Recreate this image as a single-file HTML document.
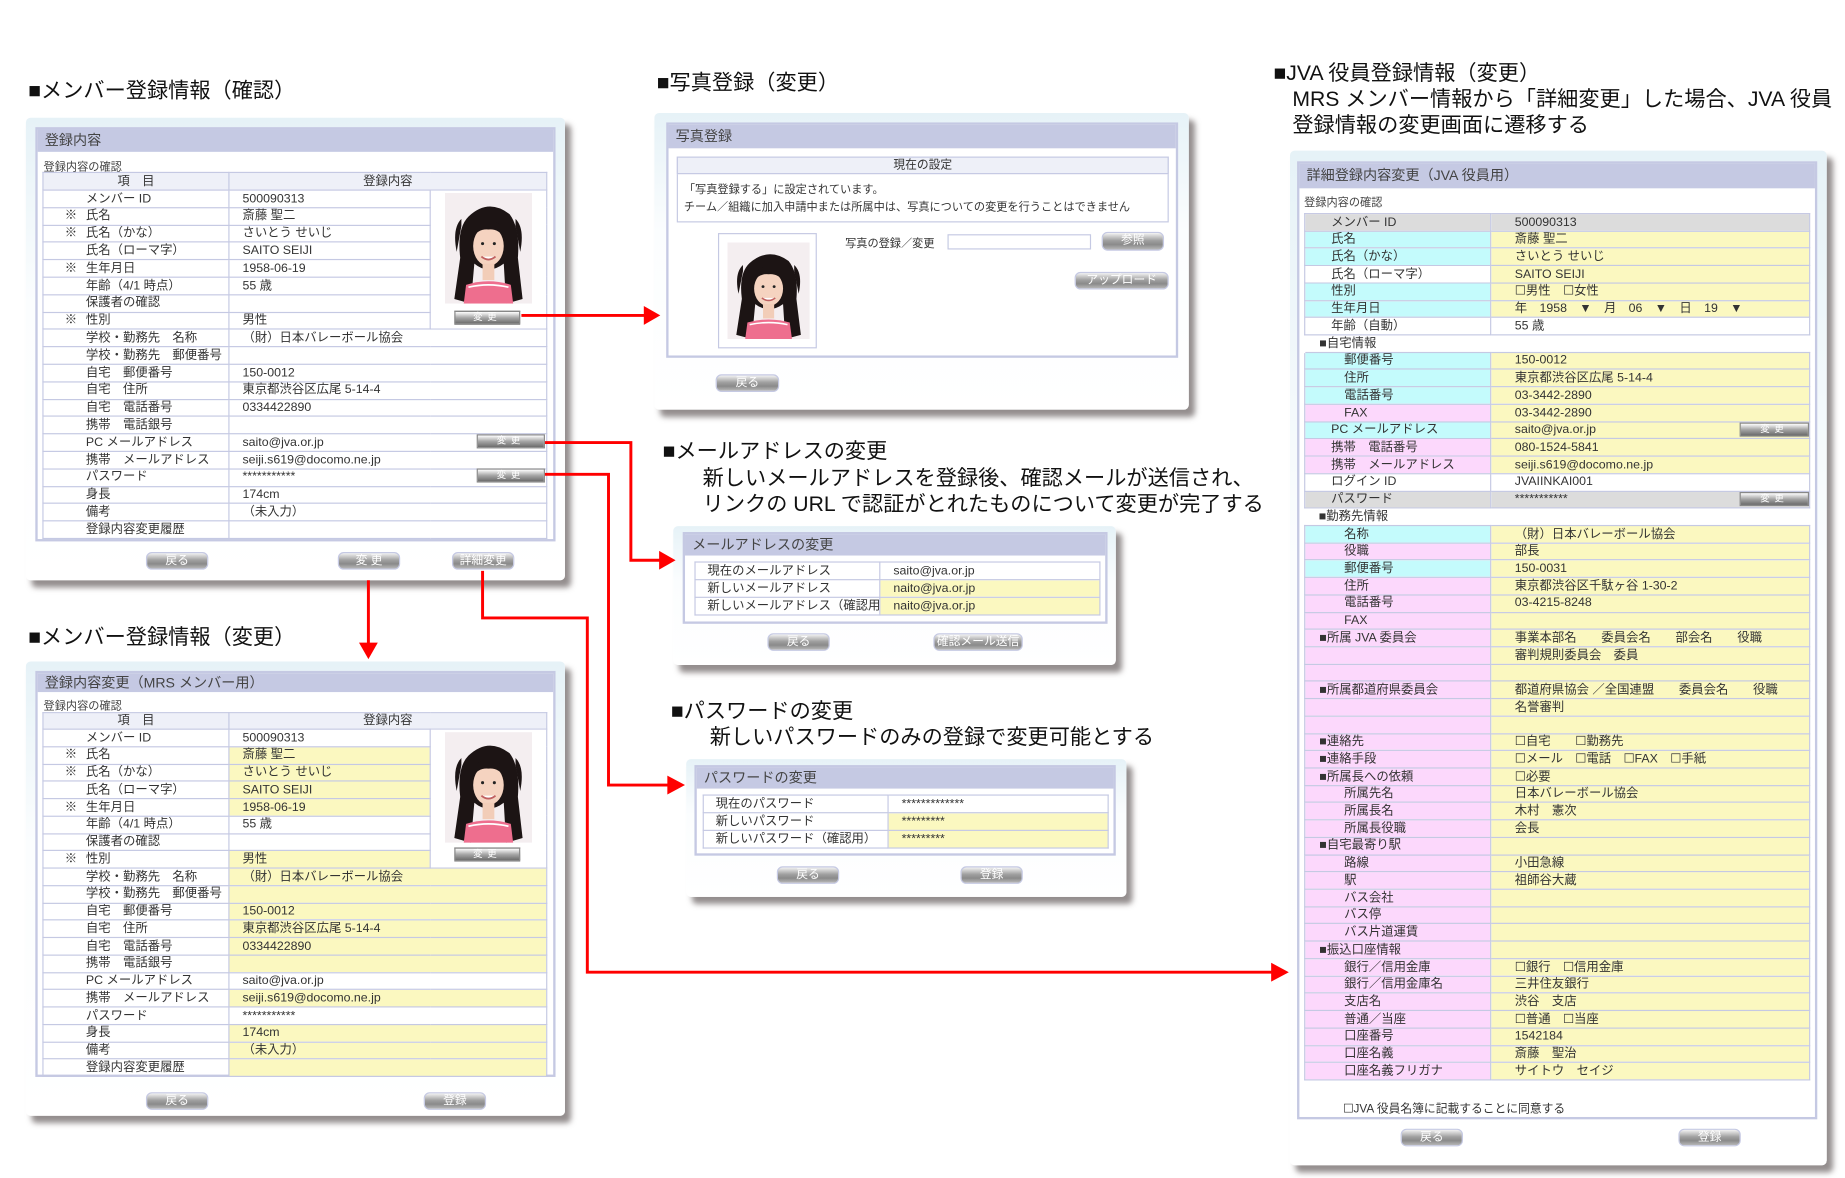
<!DOCTYPE html>
<html><head><meta charset="utf-8">
<style>
*{margin:0;padding:0;box-sizing:border-box}
html,body{width:1845px;height:1178px;overflow:hidden;background:#fff}
body{font-family:"Liberation Sans","Noto Sans CJK JP",sans-serif;color:#222}
.s{position:absolute;left:0;top:0;width:1563px;height:998px;transform:scale(1.177);transform-origin:0 0}
.a{position:absolute}
.t{position:absolute;font-size:18px;white-space:nowrap;color:#111;line-height:20px}
.o{position:absolute;background:linear-gradient(#e6f2f7,#fbfdfe 40%,#fff);border-radius:4px;box-shadow:5px 6px 5px rgba(60,50,50,.55)}
.i{position:absolute;border:2px solid #c5c9e3;background:#fff}
.h{position:absolute;left:0;top:0;right:0;background:#c5c9e3;font-size:12px;color:#444;padding-left:6px}
.sm{position:absolute;font-size:9.5px;color:#444;white-space:nowrap}
table{position:absolute;border-collapse:collapse;table-layout:fixed;font-size:10.5px;color:#333}
td{border:1px solid #c5c9e3;white-space:nowrap;overflow:hidden;line-height:1;padding:0;vertical-align:middle}
td.l{position:relative;padding-left:36px}
td.v{padding-left:11px}
td.c{text-align:center;background:#eef0f8}
.m{position:absolute;left:18px}
.y{background:#fbf8c0}.cy{background:#c4fbfc}.p{background:#fcd8fc}.g{background:#dcdcdc}
.b{position:absolute;height:15px;border-radius:5px;border:1px solid #c5c9e3;background:linear-gradient(#f2f2f2,#a0a0a0 45%,#8a8a8a 70%,#b8b8b8);color:#fff;font-size:10px;text-align:center;line-height:13px;white-space:nowrap}
.k{position:absolute;height:12px;border:1px solid #888;background:linear-gradient(#fff,#a5a5a5 50%,#6a6a6a);color:#fff;font-size:8px;text-align:center;line-height:10px;letter-spacing:4px}
td.ph{vertical-align:top;background:#fff}
.j td{height:14.72px}
.j td.l{padding-left:22px}
.j td.l2{padding-left:33px}
.j td.sec{padding-left:12px}
.j td.v{padding-left:20px}
</style></head><body>
<svg width="0" height="0" style="position:absolute">
<defs>
<symbol id="girl" viewBox="0 0 74 94">
<rect width="74" height="94" fill="#f4eef0"/>
<path d="M20 20 Q37 4 55 18 Q64 30 62 55 L66 90 L52 94 L50 60 Q37 70 25 60 L22 94 L8 90 L13 55 Q10 30 20 20Z" fill="#1c1414"/>
<path d="M14 22 Q6 30 10 50 L14 28Z M60 22 Q68 30 64 50 L60 28Z" fill="#1c1414"/>
<ellipse cx="37" cy="45" rx="13" ry="17" fill="#f5d3c0"/>
<path d="M23 38 Q26 22 37 24 Q48 22 51 38 Q45 30 37 31 Q29 30 23 38Z" fill="#1c1414"/>
<path d="M31 54 Q37 59 43 54" stroke="#c06060" stroke-width="1.5" fill="#fff"/>
<circle cx="32" cy="43" r="1.3" fill="#222"/><circle cx="42" cy="43" r="1.3" fill="#222"/>
<rect x="32" y="60" width="10" height="14" fill="#f2cdb8"/>
<path d="M16 94 L18 78 Q37 72 56 78 L58 94Z" fill="#ee6e8e"/>
<path d="M20 80 Q37 76 54 80" stroke="#fff" stroke-width="1.5" fill="none"/>
</symbol>
</defs></svg>
<div class="s">

<div class="t" style="left:24px;top:67px">■メンバー登録情報（確認）</div>
<div class="t" style="left:24px;top:531px">■メンバー登録情報（変更）</div>
<div class="t" style="left:558px;top:60px">■写真登録（変更）</div>
<div class="t" style="left:563px;top:373px">■メールアドレスの変更</div>
<div class="t" style="left:597px;top:396px">新しいメールアドレスを登録後、確認メールが送信され、</div>
<div class="t" style="left:597px;top:418px">リンクの URL で認証がとれたものについて変更が完了する</div>
<div class="t" style="left:570px;top:594px">■パスワードの変更</div>
<div class="t" style="left:603px;top:616px">新しいパスワードのみの登録で変更可能とする</div>
<div class="t" style="left:1082px;top:52px">■JVA 役員登録情報（変更）</div>
<div class="t" style="left:1098px;top:74px">MRS メンバー情報から「詳細変更」した場合、JVA 役員</div>
<div class="t" style="left:1098px;top:96px">登録情報の変更画面に遷移する</div>

<!-- Panel 1 -->
<div class="o" style="left:22px;top:100px;width:458px;height:393px"></div>
<div class="i" style="left:30px;top:108px;width:442px;height:352px">
<div class="h" style="height:19px;line-height:19px">登録内容</div></div>
<div class="sm" style="left:37px;top:134px">登録内容の確認</div>
<table style="left:36px;top:146px;width:428px">
<colgroup><col style="width:158px"><col style="width:171px"><col style="width:99px"></colgroup>
<tr style="height:15px"><td class="c">項　目</td><td class="c" colspan="2">登録内容</td></tr>
<tr style="height:14.8px"><td class="l">メンバー ID</td><td class="v">500090313</td><td class="ph" rowspan="8" style="position:relative"><svg class="a" style="left:12px;top:2px" width="74" height="94"><use href="#girl"/></svg><div class="k" style="left:20px;top:102px;width:56px">変更</div></td></tr>
<tr style="height:14.8px"><td class="l"><span class="m">※</span>氏名</td><td class="v">斎藤 聖二</td></tr>
<tr style="height:14.8px"><td class="l"><span class="m">※</span>氏名（かな）</td><td class="v">さいとう せいじ</td></tr>
<tr style="height:14.8px"><td class="l">氏名（ローマ字）</td><td class="v">SAITO SEIJI</td></tr>
<tr style="height:14.8px"><td class="l"><span class="m">※</span>生年月日</td><td class="v">1958-06-19</td></tr>
<tr style="height:14.8px"><td class="l">年齢（4/1 時点）</td><td class="v">55 歳</td></tr>
<tr style="height:14.8px"><td class="l">保護者の確認</td><td class="v"></td></tr>
<tr style="height:14.8px"><td class="l"><span class="m">※</span>性別</td><td class="v">男性</td></tr>
<tr style="height:14.8px"><td class="l">学校・勤務先　名称</td><td class="v" colspan="2">（財）日本バレーボール協会</td></tr>
<tr style="height:14.8px"><td class="l">学校・勤務先　郵便番号</td><td class="v" colspan="2"></td></tr>
<tr style="height:14.8px"><td class="l">自宅　郵便番号</td><td class="v" colspan="2">150-0012</td></tr>
<tr style="height:14.8px"><td class="l">自宅　住所</td><td class="v" colspan="2">東京都渋谷区広尾 5-14-4</td></tr>
<tr style="height:14.8px"><td class="l">自宅　電話番号</td><td class="v" colspan="2">0334422890</td></tr>
<tr style="height:14.8px"><td class="l">携帯　電話銀号</td><td class="v" colspan="2"></td></tr>
<tr style="height:14.8px"><td class="l">PC メールアドレス</td><td class="v" colspan="2">saito@jva.or.jp</td></tr>
<tr style="height:14.8px"><td class="l">携帯　メールアドレス</td><td class="v" colspan="2">seiji.s619@docomo.ne.jp</td></tr>
<tr style="height:14.8px"><td class="l">パスワード</td><td class="v" colspan="2">***********</td></tr>
<tr style="height:14.8px"><td class="l">身長</td><td class="v" colspan="2">174cm</td></tr>
<tr style="height:14.8px"><td class="l">備考</td><td class="v" colspan="2">（未入力）</td></tr>
<tr style="height:14.8px"><td class="l">登録内容変更履歴</td><td class="v" colspan="2"></td></tr>
</table>
<div class="k" style="left:405px;top:369px;width:58px">変更</div>
<div class="k" style="left:405px;top:398px;width:58px">変更</div>
<div class="b" style="left:124px;top:469px;width:53px">戻る</div>
<div class="b" style="left:287px;top:469px;width:53px">変 更</div>
<div class="b" style="left:384px;top:469px;width:53px">詳細変更</div>

<!-- Panel 2 -->
<div class="o" style="left:22px;top:562px;width:458px;height:386px"></div>
<div class="i" style="left:30px;top:570px;width:442px;height:345px">
<div class="h" style="height:16px;line-height:16px">登録内容変更（MRS メンバー用）</div></div>
<div class="sm" style="left:37px;top:592px">登録内容の確認</div>
<table style="left:36px;top:605px;width:428px">
<colgroup><col style="width:158px"><col style="width:171px"><col style="width:99px"></colgroup>
<tr style="height:14px"><td class="c">項　目</td><td class="c" colspan="2">登録内容</td></tr>
<tr style="height:14.75px"><td class="l">メンバー ID</td><td class="v">500090313</td><td class="ph" rowspan="8" style="position:relative"><svg class="a" style="left:12px;top:2px" width="74" height="94"><use href="#girl"/></svg><div class="k" style="left:20px;top:100px;width:56px">変更</div></td></tr>
<tr style="height:14.75px"><td class="l"><span class="m">※</span>氏名</td><td class="v y">斎藤 聖二</td></tr>
<tr style="height:14.75px"><td class="l"><span class="m">※</span>氏名（かな）</td><td class="v y">さいとう せいじ</td></tr>
<tr style="height:14.75px"><td class="l">氏名（ローマ字）</td><td class="v y">SAITO SEIJI</td></tr>
<tr style="height:14.75px"><td class="l"><span class="m">※</span>生年月日</td><td class="v y">1958-06-19</td></tr>
<tr style="height:14.75px"><td class="l">年齢（4/1 時点）</td><td class="v">55 歳</td></tr>
<tr style="height:14.75px"><td class="l">保護者の確認</td><td class="v"></td></tr>
<tr style="height:14.75px"><td class="l"><span class="m">※</span>性別</td><td class="v y">男性</td></tr>
<tr style="height:14.75px"><td class="l">学校・勤務先　名称</td><td class="v y" colspan="2">（財）日本バレーボール協会</td></tr>
<tr style="height:14.75px"><td class="l">学校・勤務先　郵便番号</td><td class="v y" colspan="2"></td></tr>
<tr style="height:14.75px"><td class="l">自宅　郵便番号</td><td class="v y" colspan="2">150-0012</td></tr>
<tr style="height:14.75px"><td class="l">自宅　住所</td><td class="v y" colspan="2">東京都渋谷区広尾 5-14-4</td></tr>
<tr style="height:14.75px"><td class="l">自宅　電話番号</td><td class="v y" colspan="2">0334422890</td></tr>
<tr style="height:14.75px"><td class="l">携帯　電話銀号</td><td class="v y" colspan="2"></td></tr>
<tr style="height:14.75px"><td class="l">PC メールアドレス</td><td class="v" colspan="2">saito@jva.or.jp</td></tr>
<tr style="height:14.75px"><td class="l">携帯　メールアドレス</td><td class="v y" colspan="2">seiji.s619@docomo.ne.jp</td></tr>
<tr style="height:14.75px"><td class="l">パスワード</td><td class="v" colspan="2">***********</td></tr>
<tr style="height:14.75px"><td class="l">身長</td><td class="v y" colspan="2">174cm</td></tr>
<tr style="height:14.75px"><td class="l">備考</td><td class="v y" colspan="2">（未入力）</td></tr>
<tr style="height:14.75px"><td class="l">登録内容変更履歴</td><td class="v y" colspan="2"></td></tr>
</table>
<div class="b" style="left:124px;top:928px;width:53px">戻る</div>
<div class="b" style="left:360px;top:928px;width:53px">登録</div>

<!-- Photo panel -->
<div class="o" style="left:556px;top:96px;width:454px;height:252px"></div>
<div class="i" style="left:566px;top:104px;width:435px;height:200px">
<div class="h" style="height:20px;line-height:20px">写真登録</div></div>
<div class="a" style="left:575px;top:133px;width:418px;height:56px;border:1px solid #c5c9e3"></div>
<div class="a" style="left:575px;top:133px;width:418px;height:15px;border:1px solid #c5c9e3;background:#eef0f8;font-size:10px;text-align:center;line-height:13px;color:#333">現在の設定</div>
<div class="sm" style="left:581px;top:153px;color:#333">「写真登録する」に設定されています。</div>
<div class="sm" style="left:581px;top:168px;color:#333">チーム／組織に加入申請中または所属中は、写真についての変更を行うことはできません</div>
<div class="a" style="left:610px;top:198px;width:84px;height:98px;border:1px solid #c5c9e3;background:#fff"><svg class="a" style="left:7px;top:7px" width="70" height="82" viewBox="0 0 74 94" preserveAspectRatio="none"><use href="#girl"/></svg></div>
<div class="sm" style="left:718px;top:199px;color:#333">写真の登録／変更</div>
<div class="a" style="left:805px;top:199px;width:122px;height:13px;border:1px solid #c5c9e3"></div>
<div class="b" style="left:936px;top:197px;width:53px;height:16px">参照</div>
<div class="b" style="left:913px;top:231px;width:80px">アップロード</div>
<div class="b" style="left:608px;top:318px;width:54px">戻る</div>

<!-- Email panel -->
<div class="o" style="left:572px;top:447px;width:376px;height:118px"></div>
<div class="i" style="left:580px;top:452px;width:361px;height:78px">
<div class="h" style="height:18px;line-height:18px">メールアドレスの変更</div></div>
<table style="left:590px;top:477px;width:344px">
<colgroup><col style="width:157px"><col style="width:187px"></colgroup>
<tr style="height:15px"><td style="padding-left:10px">現在のメールアドレス</td><td class="v">saito@jva.or.jp</td></tr>
<tr style="height:15px"><td style="padding-left:10px">新しいメールアドレス</td><td class="v y">naito@jva.or.jp</td></tr>
<tr style="height:15px"><td style="padding-left:10px">新しいメールアドレス（確認用）</td><td class="v y">naito@jva.or.jp</td></tr>
</table>
<div class="b" style="left:652px;top:538px;width:53px">戻る</div>
<div class="b" style="left:793px;top:538px;width:76px">確認メール送信</div>

<!-- Password panel -->
<div class="o" style="left:583px;top:645px;width:374px;height:117px"></div>
<div class="i" style="left:590px;top:650px;width:358px;height:77px">
<div class="h" style="height:18px;line-height:18px">パスワードの変更</div></div>
<table style="left:597px;top:675px;width:344px">
<colgroup><col style="width:157px"><col style="width:187px"></colgroup>
<tr style="height:15px"><td style="padding-left:10px">現在のパスワード</td><td class="v">*************</td></tr>
<tr style="height:15px"><td style="padding-left:10px">新しいパスワード</td><td class="v y">*********</td></tr>
<tr style="height:15px"><td style="padding-left:10px">新しいパスワード（確認用）</td><td class="v y">*********</td></tr>
</table>
<div class="b" style="left:660px;top:736px;width:53px">戻る</div>
<div class="b" style="left:816px;top:736px;width:53px">登録</div>

<!-- JVA panel -->
<div class="o" style="left:1096px;top:128px;width:456px;height:862px"></div>
<div class="i" style="left:1102px;top:137px;width:442px;height:814px">
<div class="h" style="height:21px;line-height:21px">詳細登録内容変更（JVA 役員用）</div></div>
<div class="sm" style="left:1108px;top:164px">登録内容の確認</div>
<table class="j" style="left:1108px;top:181px;width:429px">
<colgroup><col style="width:158px"><col style="width:271px"></colgroup>
<tr><td class="l g">メンバー ID</td><td class="v g">500090313</td></tr>
<tr><td class="l cy">氏名</td><td class="v y">斎藤 聖二</td></tr>
<tr><td class="l cy">氏名（かな）</td><td class="v y">さいとう せいじ</td></tr>
<tr><td class="l">氏名（ローマ字）</td><td class="v y">SAITO SEIJI</td></tr>
<tr><td class="l cy">性別</td><td class="v y">☐男性　☐女性</td></tr>
<tr><td class="l cy">生年月日</td><td class="v y">年　1958　▼　月　06　▼　日　19　▼</td></tr>
<tr><td class="l">年齢（自動）</td><td class="v">55 歳</td></tr>
<tr><td class="sec" style="border:none;border-left:1px solid #fff">■自宅情報</td><td style="border:none"></td></tr>
<tr><td class="l2 cy">郵便番号</td><td class="v y">150-0012</td></tr>
<tr><td class="l2 cy">住所</td><td class="v y">東京都渋谷区広尾 5-14-4</td></tr>
<tr><td class="l2 cy">電話番号</td><td class="v y">03-3442-2890</td></tr>
<tr><td class="l2 p">FAX</td><td class="v y">03-3442-2890</td></tr>
<tr><td class="l cy">PC メールアドレス</td><td class="v y">saito@jva.or.jp</td></tr>
<tr><td class="l p">携帯　電話番号</td><td class="v y">080-1524-5841</td></tr>
<tr><td class="l p">携帯　メールアドレス</td><td class="v y">seiji.s619@docomo.ne.jp</td></tr>
<tr><td class="l">ログイン ID</td><td class="v">JVAIINKAI001</td></tr>
<tr><td class="l g">パスワード</td><td class="v g">***********</td></tr>
<tr><td class="sec" style="border:none">■勤務先情報</td><td style="border:none"></td></tr>
<tr><td class="l2 cy">名称</td><td class="v y">（財）日本バレーボール協会</td></tr>
<tr><td class="l2 p">役職</td><td class="v y">部長</td></tr>
<tr><td class="l2 cy">郵便番号</td><td class="v y">150-0031</td></tr>
<tr><td class="l2 p">住所</td><td class="v y">東京都渋谷区千駄ヶ谷 1-30-2</td></tr>
<tr><td class="l2 p">電話番号</td><td class="v y">03-4215-8248</td></tr>
<tr><td class="l2 p">FAX</td><td class="v y"></td></tr>
<tr><td class="sec p">■所属 JVA 委員会</td><td class="v y">事業本部名　　委員会名　　部会名　　役職</td></tr>
<tr><td class="p"></td><td class="v y">審判規則委員会　委員</td></tr>
<tr><td class="p"></td><td class="v y"></td></tr>
<tr><td class="sec p">■所属都道府県委員会</td><td class="v y">都道府県協会 ／全国連盟　　委員会名　　役職</td></tr>
<tr><td class="p"></td><td class="v y">名誉審判</td></tr>
<tr><td class="p"></td><td class="v y"></td></tr>
<tr><td class="sec p">■連絡先</td><td class="v y">☐自宅　　☐勤務先</td></tr>
<tr><td class="sec p">■連絡手段</td><td class="v y">☐メール　☐電話　☐FAX　☐手紙</td></tr>
<tr><td class="sec p">■所属長への依頼</td><td class="v y">☐必要</td></tr>
<tr><td class="l2 p">所属先名</td><td class="v y">日本バレーボール協会</td></tr>
<tr><td class="l2 p">所属長名</td><td class="v y">木村　憲次</td></tr>
<tr><td class="l2 p">所属長役職</td><td class="v y">会長</td></tr>
<tr><td class="sec p">■自宅最寄り駅</td><td class="v y"></td></tr>
<tr><td class="l2 p">路線</td><td class="v y">小田急線</td></tr>
<tr><td class="l2 p">駅</td><td class="v y">祖師谷大蔵</td></tr>
<tr><td class="l2 p">バス会社</td><td class="v y"></td></tr>
<tr><td class="l2 p">バス停</td><td class="v y"></td></tr>
<tr><td class="l2 p">バス片道運賃</td><td class="v y"></td></tr>
<tr><td class="sec p">■振込口座情報</td><td class="v y"></td></tr>
<tr><td class="l2 p">銀行／信用金庫</td><td class="v y">☐銀行　☐信用金庫</td></tr>
<tr><td class="l2 p">銀行／信用金庫名</td><td class="v y">三井住友銀行</td></tr>
<tr><td class="l2 p">支店名</td><td class="v y">渋谷　支店</td></tr>
<tr><td class="l2 p">普通／当座</td><td class="v y">☐普通　☐当座</td></tr>
<tr><td class="l2 p">口座番号</td><td class="v y">1542184</td></tr>
<tr><td class="l2 p">口座名義</td><td class="v y">斎藤　聖治</td></tr>
<tr><td class="l2 p">口座名義フリガナ</td><td class="v y">サイトウ　セイジ</td></tr>
</table>
<div class="k" style="left:1478px;top:359px;width:59px">変更</div>
<div class="k" style="left:1478px;top:418px;width:59px">変更</div>
<div class="sm" style="left:1141px;top:933px;font-size:10px;color:#333">☐JVA 役員名簿に記載することに同意する</div>
<div class="b" style="left:1190px;top:959px;width:53px">戻る</div>
<div class="b" style="left:1426px;top:959px;width:53px">登録</div>

<svg class="a" style="left:0;top:0" width="1563" height="998">
<g stroke="#f00" stroke-width="2.5" fill="none">
<polyline points="443,268 550,268"/>
<polyline points="313,493 313,548"/>
<polyline points="463,376 536,376 536,476 563,476"/>
<polyline points="463,403 517,403 517,667 570,667"/>
<polyline points="410,485 410,525 499,525 499,826 1083,826"/>
</g>
<g fill="#f00">
<polygon points="547,260 561,268 547,276"/>
<polygon points="305,546 313,560 321,546"/>
<polygon points="560,468 574,476 560,484"/>
<polygon points="567,659 582,667 567,675"/>
<polygon points="1080,818 1095,826 1080,834"/>
</g>
</svg>
</div>
</body></html>
